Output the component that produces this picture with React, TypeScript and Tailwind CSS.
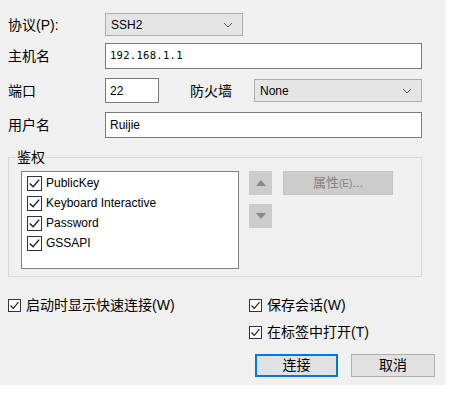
import type { ReactNode } from 'react';

const font = { fontFamily: '"Liberation Sans", "Noto Sans CJK SC", sans-serif' };

function Chevron() {
    return (
        <svg width="10" height="6" viewBox="0 0 10 6" className="shrink-0">
            <path d="M1 1 L5 5 L9 1" fill="none" stroke="#5a5a5a" strokeWidth="1" />
        </svg>
    );
}

function Check({ size = 13 }: { size?: number }) {
    return (
        <span
            className="inline-flex items-center justify-center shrink-0 bg-white border border-[#333333]"
            style={{ width: size, height: size }}
        >
            <svg width={size - 2} height={size - 2} viewBox="0 0 11 11">
                <path d="M1.5 5.5 L4.3 8.3 L9.5 2.2" fill="none" stroke="#222222" strokeWidth="1.2" />
            </svg>
        </span>
    );
}

function Combo({ value, className }: { value: string; className: string }) {
    return (
        <div className={`flex items-center justify-between pl-[5px] pr-[9px] bg-[#e5e5e5] border border-[#adadad] text-[12px] text-black ${className}`}>
            <span>{value}</span>
            <Chevron />
        </div>
    );
}

function Field({ children, className }: { children: ReactNode; className: string }) {
    return (
        <div className={`flex items-center pl-[4px] bg-white border border-[#7a7a7a] text-[12px] text-black ${className}`}>
            {children}
        </div>
    );
}

function Label({ children, className = 'w-[97px]' }: { children: ReactNode; className?: string }) {
    return <div className={`text-[14px] text-black shrink-0 leading-none ${className}`}>{children}</div>;
}

export default function App() {
    const methods = ['PublicKey', 'Keyboard Interactive', 'Password', 'GSSAPI'];

    return (
        <div className="w-[451px] h-[393px] bg-white overflow-hidden" style={font}>
            <div className="w-[446px] h-[385px] bg-[#f0f0f0] pl-[8px]">
                {/* 协议 */}
                <div className="flex items-center pt-[13px]">
                    <Label>协议(P):</Label>
                    <Combo value="SSH2" className="w-[138px] h-[23px]" />
                </div>

                {/* 主机名 */}
                <div className="flex items-center mt-[7px]">
                    <Label>主机名</Label>
                    <Field className="w-[317px] h-[26px]">
                        <span className="text-[10.5px] tracking-[0.3px]" style={{ fontFamily: '"DejaVu Sans Mono", monospace' }}>192.168.1.1</span>
                    </Field>
                </div>

                {/* 端口 / 防火墙 */}
                <div className="flex items-center mt-[9px]">
                    <Label>端口</Label>
                    <Field className="w-[54px] h-[25px]">22</Field>
                    <Label className="ml-[31px] w-[64px]">防火墙</Label>
                    <Combo value="None" className="w-[168px] h-[23px]" />
                </div>

                {/* 用户名 */}
                <div className="flex items-center mt-[9px]">
                    <Label>用户名</Label>
                    <Field className="w-[317px] h-[26px]">Ruijie</Field>
                </div>

                {/* 鉴权 */}
                <fieldset className="mt-[11px] w-[414px] border border-[#d9d9d9] pb-[7px]">
                    <legend className="ml-[7px] px-[1px] text-[14px] leading-[16px] text-black">鉴权</legend>
                    <div className="flex items-start mt-[6px]">
                        <div className="ml-[12px] w-[218px] h-[98px] bg-white border border-[#828282] pt-[4px] pl-[5px] flex flex-col gap-[6px]">
                            {methods.map((m) => (
                                <div key={m} className="flex items-center gap-[4px] h-[14px] text-[12px] text-black">
                                    <Check size={15} />
                                    <span>{m}</span>
                                </div>
                            ))}
                        </div>
                        <div className="ml-[10px] flex flex-col gap-[9px]">
                            <div className="w-[23px] h-[24px] bg-[#cccccc] flex items-center justify-center">
                                <svg width="10" height="6" viewBox="0 0 10 6"><path d="M0 6 L5 0 L10 6 Z" fill="#8a8a8a" /></svg>
                            </div>
                            <div className="w-[23px] h-[24px] bg-[#cccccc] flex items-center justify-center">
                                <svg width="10" height="6" viewBox="0 0 10 6"><path d="M0 0 L10 0 L5 6 Z" fill="#8a8a8a" /></svg>
                            </div>
                        </div>
                        <div className="ml-[11px] w-[110px] h-[24px] bg-[#cccccc] border border-[#c4c4c4] flex items-center justify-center text-[13px] text-[#838383]">
                            属性<span className="text-[10px]">(E)</span>...
                        </div>
                    </div>
                </fieldset>

                {/* 底部选项 */}
                <div className="flex mt-[21px]">
                    <div className="w-[241px] flex items-center gap-[5px] h-[14px]">
                        <Check />
                        <span className="text-[14px] text-black leading-none">启动时显示快速连接(W)</span>
                    </div>
                    <div className="flex flex-col gap-[13px]">
                        <div className="flex items-center gap-[5px] h-[14px]">
                            <Check />
                            <span className="text-[14px] text-black leading-none">保存会话(W)</span>
                        </div>
                        <div className="flex items-center gap-[5px] h-[14px]">
                            <Check />
                            <span className="text-[14px] text-black leading-none">在标签中打开(T)</span>
                        </div>
                    </div>
                </div>

                <div className="flex mt-[15px] ml-[247px] gap-[13px]">
                    <div className="w-[83px] h-[23px] bg-[#e1e1e1] border-2 border-[#0078d7] flex items-center justify-center text-[14px] text-black">
                        连接
                    </div>
                    <div className="w-[84px] h-[23px] bg-[#e1e1e1] border border-[#adadad] flex items-center justify-center text-[14px] text-black">
                        取消
                    </div>
                </div>
            </div>
        </div>
    );
}
